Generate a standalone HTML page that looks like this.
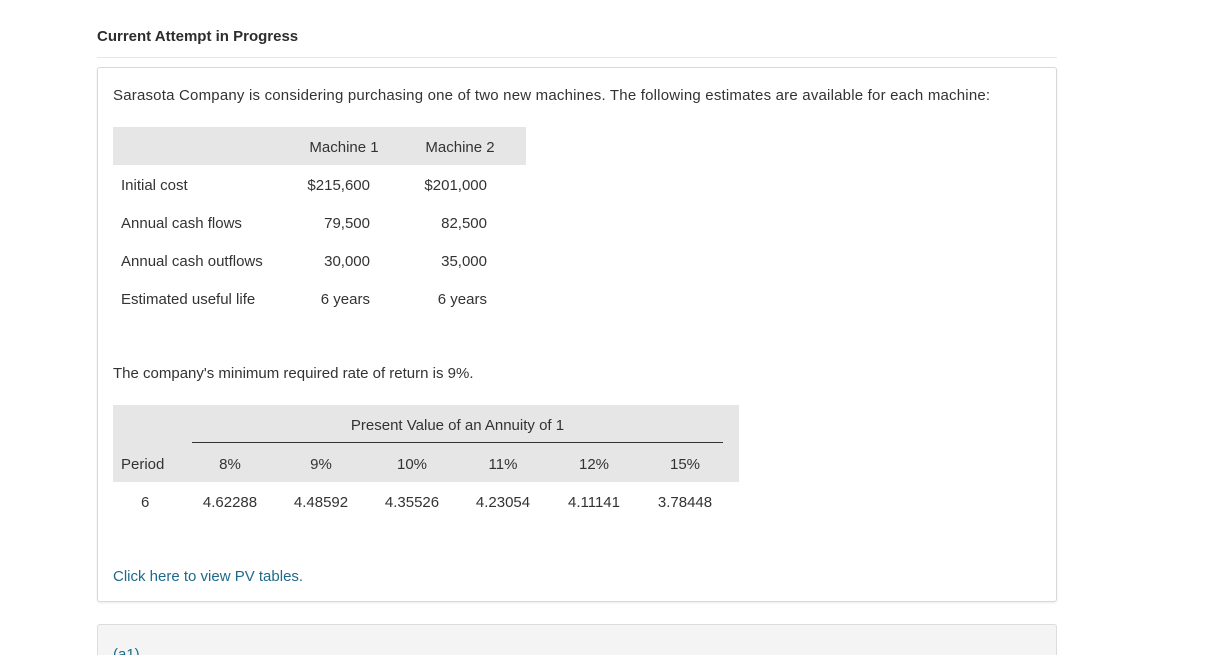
<!DOCTYPE html>
<html><head><meta charset="utf-8"><style>
*{margin:0;padding:0;box-sizing:border-box}
html,body{width:1218px;height:655px;overflow:hidden}
body{background:#fff;font-family:"Liberation Sans",sans-serif;color:#333;font-size:15px;position:relative}
.a{position:absolute;white-space:nowrap}
.r{text-align:right}
.c{text-align:center}
</style></head><body>
<div class="a" style="left:97px;top:28px;font-weight:bold;font-size:15px;color:#2d2d2d">Current Attempt in Progress</div>
<div class="a" style="left:97px;top:57px;width:960px;height:1px;background:#e6e6e6"></div>
<div class="a" style="left:97px;top:67px;width:960px;height:535px;border:1px solid #d8d8d8;border-radius:3px;box-shadow:0 1px 2px rgba(0,0,0,.08)"></div>
<div class="a" style="left:113px;top:87px;font-size:15px;letter-spacing:0.2px">Sarasota Company is considering purchasing one of two new machines. The following estimates are available for each machine:</div>
<div class="a" style="left:113px;top:127px;width:413px;height:38px;background:#e6e6e6"></div>
<div class="a c" style="left:294px;top:139px;width:100px">Machine 1</div>
<div class="a c" style="left:410px;top:139px;width:100px">Machine 2</div>
<div class="a" style="left:121px;top:177px">Initial cost</div>
<div class="a" style="left:121px;top:215px">Annual cash flows</div>
<div class="a" style="left:121px;top:253px">Annual cash outflows</div>
<div class="a" style="left:121px;top:291px">Estimated useful life</div>
<div class="a r" style="left:270px;width:100px;top:177px">$215,600</div>
<div class="a r" style="left:270px;width:100px;top:215px">79,500</div>
<div class="a r" style="left:270px;width:100px;top:253px">30,000</div>
<div class="a r" style="left:270px;width:100px;top:291px">6 years</div>
<div class="a r" style="left:387px;width:100px;top:177px">$201,000</div>
<div class="a r" style="left:387px;width:100px;top:215px">82,500</div>
<div class="a r" style="left:387px;width:100px;top:253px">35,000</div>
<div class="a r" style="left:387px;width:100px;top:291px">6 years</div>
<div class="a" style="left:113px;top:365px">The company's minimum required rate of return is 9%.</div>
<div class="a" style="left:113px;top:405px;width:626px;height:77px;background:#e6e6e6"></div>
<div class="a c" style="left:192px;width:531px;top:417px">Present Value of an Annuity of 1</div>
<div class="a" style="left:192px;top:442px;width:531px;height:1px;background:#333"></div>
<div class="a" style="left:121px;top:456px">Period</div>
<div class="a c" style="left:180px;width:100px;top:456px">8%</div>
<div class="a c" style="left:271px;width:100px;top:456px">9%</div>
<div class="a c" style="left:362px;width:100px;top:456px">10%</div>
<div class="a c" style="left:453px;width:100px;top:456px">11%</div>
<div class="a c" style="left:544px;width:100px;top:456px">12%</div>
<div class="a c" style="left:635px;width:100px;top:456px">15%</div>
<div class="a" style="left:141px;top:494px">6</div>
<div class="a c" style="left:180px;width:100px;top:494px">4.62288</div>
<div class="a c" style="left:271px;width:100px;top:494px">4.48592</div>
<div class="a c" style="left:362px;width:100px;top:494px">4.35526</div>
<div class="a c" style="left:453px;width:100px;top:494px">4.23054</div>
<div class="a c" style="left:544px;width:100px;top:494px">4.11141</div>
<div class="a c" style="left:635px;width:100px;top:494px">3.78448</div>
<div class="a" style="left:113px;top:568px;color:#1f6a8c">Click here to view PV tables.</div>
<div class="a" style="left:97px;top:624px;width:960px;height:40px;background:#f4f4f4;border:1px solid #dcdcdc;border-radius:3px"></div>
<div class="a" style="left:113px;top:646px;color:#1f6a8c">(a1)</div>
</body></html>
